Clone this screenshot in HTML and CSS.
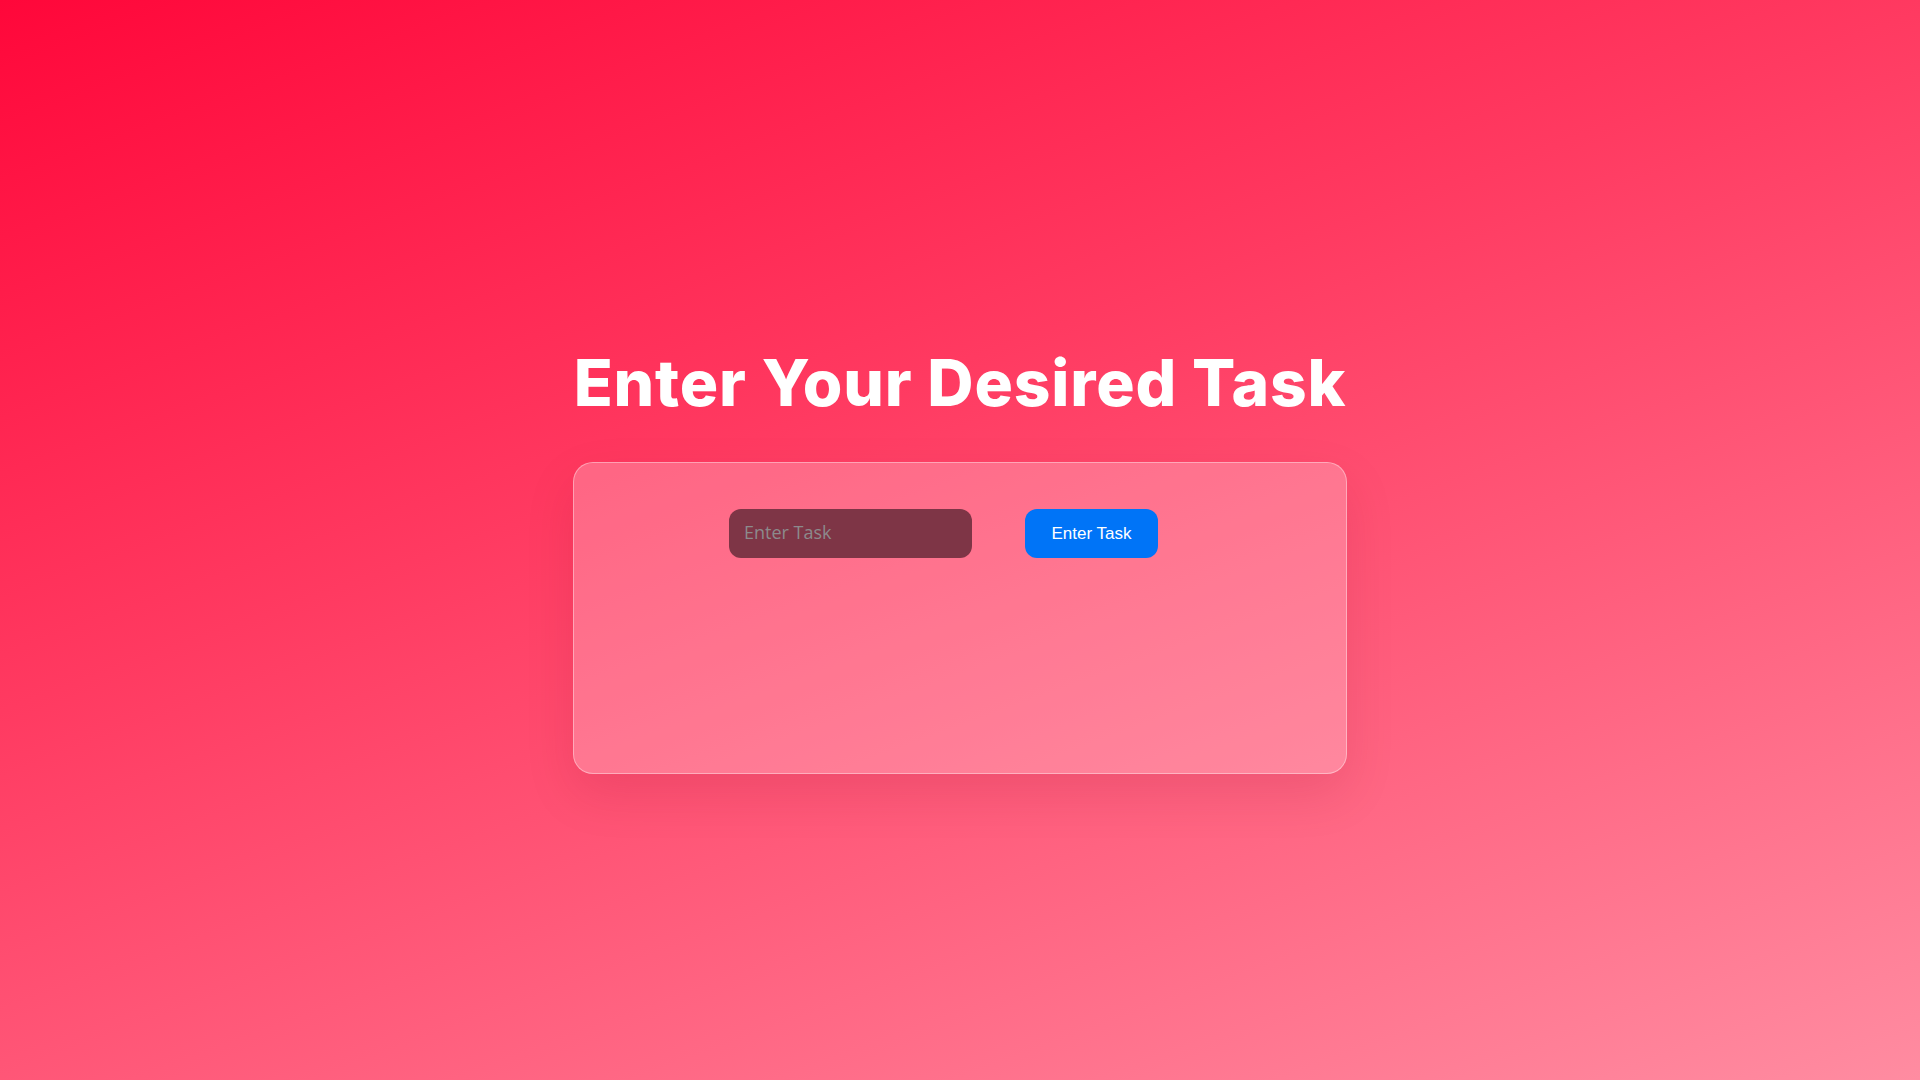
FILE: index.html
```html
<!DOCTYPE html>
<html lang="en">
<head>
<meta charset="utf-8">
<title>Task</title>
<link rel="stylesheet" href="styles.css">
</head>
<body>
<main class="page">
  <h1 class="title">Enter Your Desired Task</h1>
  <section class="card">
    <form class="task-form" onsubmit="return false;">
      <input class="task-input" type="text" placeholder="Enter Task">
      <button class="task-btn" type="submit">Enter Task</button>
    </form>
  </section>
</main>
</body>
</html>
```
FILE: styles.css
```css
html, body {
  margin: 0;
  padding: 0;
}
body {
  min-height: 100vh;
  background: linear-gradient(160deg, #ff073a 0%, #ff3a61 40%, #ff8ca1 100%);
  font-family: "Inter", "Open Sans", sans-serif;
  overflow: hidden;
}
.page {
  display: flex;
  flex-direction: column;
  align-items: center;
  padding-top: 343px;
  min-height: 100vh;
  box-sizing: border-box;
}
.title {
  margin: 0 0 39px;
  font-size: 64px;
  line-height: 80px;
  font-weight: 800;
  color: #ffffff;
  letter-spacing: 0.85px;
}
.card {
  width: 774px;
  height: 312px;
  box-sizing: border-box;
  border: 1px solid rgba(255, 255, 255, 0.38);
  border-radius: 20px;
  background: rgba(255, 255, 255, 0.23);
  box-shadow: 0 20px 50px rgba(120, 0, 30, 0.12);
}
.task-form {
  display: flex;
  gap: 53px;
  padding: 46px 0 0 155px;
}
.task-input {
  width: 243px;
  height: 49px;
  box-sizing: border-box;
  border: none;
  outline: none;
  border-radius: 12px;
  background: #7e3546;
  padding: 0 15px 3px;
  font-family: "Open Sans", sans-serif;
  font-size: 18px;
  color: #ddd;
}
.task-input::placeholder {
  color: #8c8a8c;
}
.task-btn {
  width: 133px;
  height: 49px;
  border: none;
  border-radius: 12px;
  background: #0074f7;
  color: #ffffff;
  font-family: "Liberation Sans", Arial, sans-serif;
  font-size: 17px;
  cursor: pointer;
}
```
